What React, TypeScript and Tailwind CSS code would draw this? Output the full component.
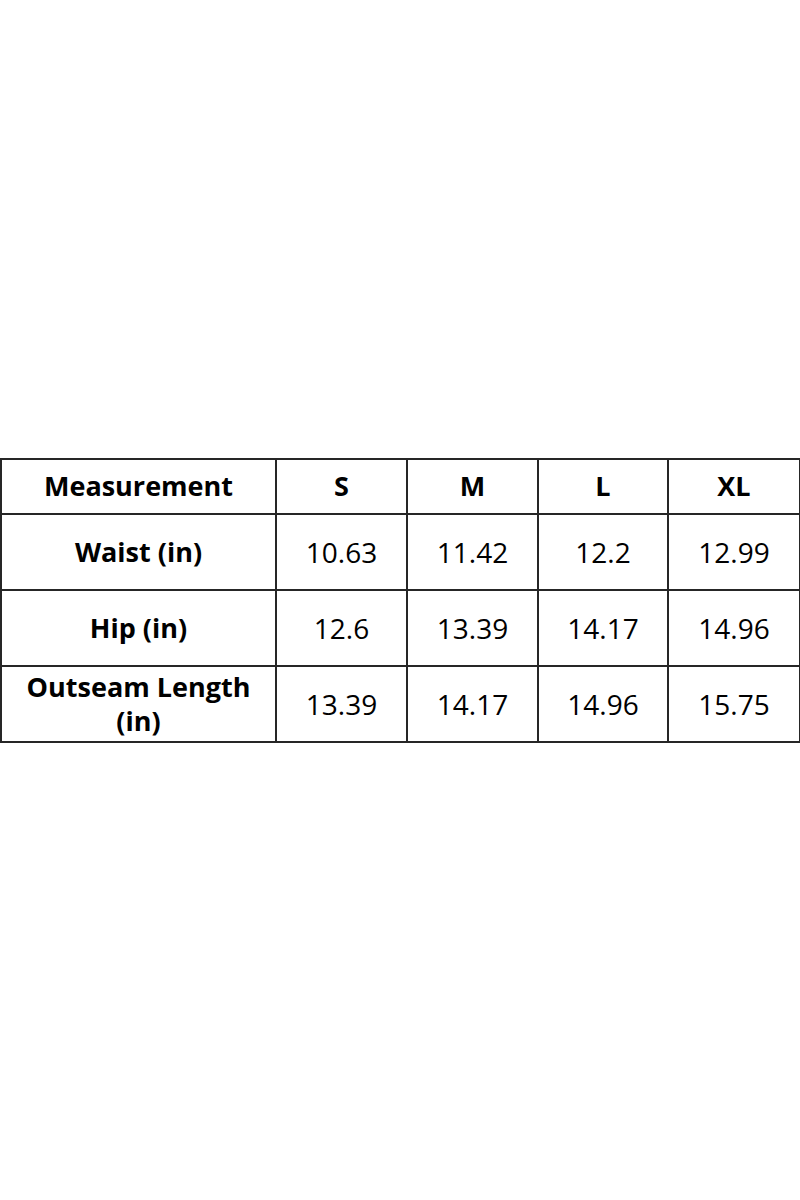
const sizes = ["S", "M", "L", "XL"];

const rows = [
  { label: "Waist (in)", values: ["10.63", "11.42", "12.2", "12.99"] },
  { label: "Hip (in)", values: ["12.6", "13.39", "14.17", "14.96"] },
  { label: "Outseam Length (in)", values: ["13.39", "14.17", "14.96", "15.75"] },
];

export default function App() {
  return (
    <div
      className="flex h-[1200px] w-[800px] items-center bg-white text-black"
      style={{ fontFamily: '"Open Sans", "Noto Sans", sans-serif' }}
    >
      <table className="w-[799px] table-fixed border-collapse">
        <colgroup>
          <col className="w-[275px]" />
          <col className="w-[131px]" />
          <col className="w-[131px]" />
          <col className="w-[130px]" />
          <col className="w-[132px]" />
        </colgroup>
        <thead>
          <tr className="h-[55px]">
            <th className="border-2 border-[#262626] text-center text-[27px] font-bold">
              Measurement
            </th>
            {sizes.map((s) => (
              <th key={s} className="border-2 border-[#262626] text-center text-[27px] font-bold">
                {s}
              </th>
            ))}
          </tr>
        </thead>
        <tbody>
          {rows.map((r) => (
            <tr key={r.label} className="h-[76px]">
              <td className="border-2 border-[#262626] px-3 text-center text-[27px] leading-[34px] font-bold">
                {r.label}
              </td>
              {r.values.map((v, i) => (
                <td key={i} className="border-2 border-[#262626] text-center text-[28px]">
                  {v}
                </td>
              ))}
            </tr>
          ))}
        </tbody>
      </table>
    </div>
  );
}
